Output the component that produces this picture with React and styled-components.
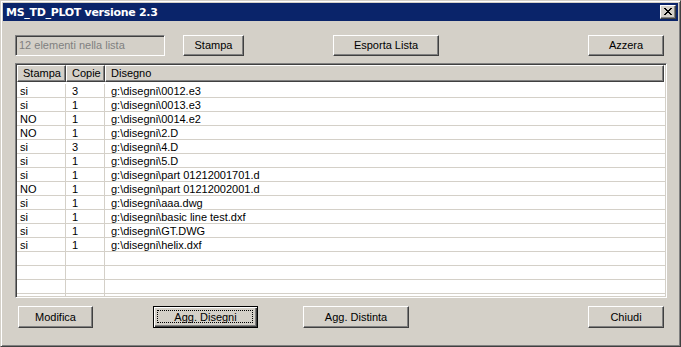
import React from "react";
import styled, { createGlobalStyle } from "styled-components";

const Global = createGlobalStyle`
  html, body { margin: 0; padding: 0; background: #D4D0C8; }
  body { width: 681px; height: 347px; overflow: hidden; }
  * { box-sizing: border-box; }
`;

const Window = styled.div`
  width: 681px;
  height: 347px;
  background: #d4d0c8;
  border: 1px solid;
  border-color: #d4d0c8 #404040 #404040 #d4d0c8;
  box-shadow: inset 1px 1px #ffffff, inset -1px -1px #808080;
  padding: 2px;
  display: flex;
  flex-direction: column;
  font-family: "Liberation Sans", Arial, sans-serif;
  font-size: 11px;
  color: #000;
`;

const TitleBar = styled.div`
  height: 18px;
  background: #0a246a;
  display: flex;
  align-items: center;
  justify-content: space-between;
  padding: 0 2px 0 3px;
  flex: none;
`;

const Title = styled.span`
  font-family: "DejaVu Sans", Verdana, sans-serif;
  font-weight: bold;
  font-size: 11px;
  color: #fff;
  letter-spacing: -0.3px;
  line-height: 18px;
  padding-top: 1px;
`;

const CloseBtn = styled.div`
  width: 16px;
  height: 14px;
  background: #d4d0c8;
  border: 1px solid;
  border-color: #ffffff #404040 #404040 #ffffff;
  box-shadow: inset -1px -1px #808080;
  display: flex;
  align-items: center;
  justify-content: center;
  padding-bottom: 1px;
  padding-right: 1px;
`;

const Body = styled.div`
  flex: 1;
  display: flex;
  flex-direction: column;
  padding: 14px 10px 0 12px;
`;

const Row = styled.div`
  display: flex;
  align-items: flex-start;
  height: ${(p) => p.$h}px;
  margin-top: ${(p) => p.$mt || 0}px;
  flex: none;
`;

const Button = styled.div`
  position: relative;
  width: ${(p) => p.$w}px;
  height: ${(p) => p.$h}px;
  margin-left: ${(p) => p.$ml}px;
  background: #d4d0c8;
  border: 1px solid;
  border-color: ${(p) =>
    p.$default ? "#000 #000 #000 #000" : "#ffffff #404040 #404040 #ffffff"};
  box-shadow: ${(p) =>
    p.$default
      ? "inset 1px 1px #ffffff, inset -1px -1px #404040, inset -2px -2px #808080"
      : "inset -1px -1px #808080"};
  display: flex;
  align-items: center;
  justify-content: center;
  padding-bottom: 1px;
  flex: none;
  &::after {
    content: "";
    display: ${(p) => (p.$default ? "block" : "none")};
    position: absolute;
    left: 3px;
    top: 3px;
    right: 4px;
    bottom: 4px;
    border: 1px dotted #000;
  }
`;

const TextBox = styled.div`
  width: ${(p) => p.$w}px;
  height: ${(p) => p.$h}px;
  background: #d4d0c8;
  border: 1px solid;
  border-color: #808080 #ffffff #ffffff #808080;
  box-shadow: inset 1px 1px #404040, inset -1px -1px #d4d0c8;
  color: #808080;
  display: flex;
  align-items: center;
  padding: 0 0 1px 3px;
  flex: none;
`;

const List = styled.div`
  margin-top: 7px;
  width: 652px;
  height: 235px;
  border: 1px solid;
  border-color: #808080 #ffffff #ffffff #808080;
  box-shadow: inset 1px 1px #404040, inset -1px -1px #d4d0c8;
  background: #fff;
  padding: 1px;
  display: flex;
  flex-direction: column;
  overflow: hidden;
  flex: none;
`;

const Grid = `
  display: grid;
  grid-template-columns: 49px 39px 1fr;
`;

const Header = styled.div`
  ${Grid};
  height: 17px;
  flex: none;
  margin-right: 1px;
`;

const HeadCell = styled.div`
  background: #d4d0c8;
  border: 1px solid;
  border-color: #ffffff #404040 #404040 #ffffff;
  box-shadow: inset -1px -1px #808080;
  padding: 0 0 1px 5px;
  display: flex;
  align-items: center;
  white-space: nowrap;
  overflow: hidden;
`;

const Rows = styled.div`
  padding-top: 2px;
  flex: 1;
  overflow: hidden;
`;

const DataRow = styled.div`
  ${Grid};
  height: 14px;
`;

const Cell = styled.div`
  height: 14px;
  line-height: 14px;
  border-bottom: 1px solid #d4d0c8;
  border-right: ${(p) => (p.$last ? "none" : "1px solid #d4d0c8")};
  padding-left: ${(p) => p.$pl}px;
  white-space: nowrap;
  overflow: hidden;
`;

const CloseGlyph = () => {
  const px = [
    [0, 0], [1, 0], [6, 0], [7, 0],
    [1, 1], [2, 1], [5, 1], [6, 1],
    [2, 2], [3, 2], [4, 2], [5, 2],
    [3, 3], [4, 3],
    [2, 4], [3, 4], [4, 4], [5, 4],
    [1, 5], [2, 5], [5, 5], [6, 5],
    [0, 6], [1, 6], [6, 6], [7, 6],
  ];
  return (
    <svg width="8" height="7" viewBox="0 0 8 7" shapeRendering="crispEdges">
      {px.map(([x, y]) => (
        <rect key={`${x}-${y}`} x={x} y={y} width="1" height="1" fill="#000" />
      ))}
    </svg>
  );
};

const data = [
  ["si", "3", "g:\\disegni\\0012.e3"],
  ["si", "1", "g:\\disegni\\0013.e3"],
  ["NO", "1", "g:\\disegni\\0014.e2"],
  ["NO", "1", "g:\\disegni\\2.D"],
  ["si", "3", "g:\\disegni\\4.D"],
  ["si", "1", "g:\\disegni\\5.D"],
  ["si", "1", "g:\\disegni\\part 01212001701.d"],
  ["NO", "1", "g:\\disegni\\part 01212002001.d"],
  ["si", "1", "g:\\disegni\\aaa.dwg"],
  ["si", "1", "g:\\disegni\\basic line test.dxf"],
  ["si", "1", "g:\\disegni\\GT.DWG"],
  ["si", "1", "g:\\disegni\\helix.dxf"],
  ["", "", ""],
  ["", "", ""],
  ["", "", ""],
  ["", "", ""],
];

export default function App() {
  return (
    <>
      <Global />
      <Window>
        <TitleBar>
          <Title>MS_TD_PLOT versione 2.3</Title>
          <CloseBtn>
            <CloseGlyph />
          </CloseBtn>
        </TitleBar>
        <Body>
          <Row $h={21}>
            <TextBox $w={150} $h={21}>12 elementi nella lista</TextBox>
            <Button $w={61} $h={21} $ml={18}>Stampa</Button>
            <Button $w={106} $h={21} $ml={89}>Esporta Lista</Button>
            <Button $w={76} $h={21} $ml={149}>Azzera</Button>
          </Row>
          <List>
            <Header>
              <HeadCell>Stampa</HeadCell>
              <HeadCell>Copie</HeadCell>
              <HeadCell>Disegno</HeadCell>
            </Header>
            <Rows>
              {data.map((r, i) => (
                <DataRow key={i}>
                  <Cell $pl={3}>{r[0]}</Cell>
                  <Cell $pl={6}>{r[1]}</Cell>
                  <Cell $pl={6} $last>{r[2]}</Cell>
                </DataRow>
              ))}
            </Rows>
          </List>
          <Row $h={22} $mt={8}>
            <Button $w={75} $h={22} $ml={3}>Modifica</Button>
            <Button $w={105} $h={22} $ml={60} $default>Agg. Disegni</Button>
            <Button $w={106} $h={22} $ml={45}>Agg. Distinta</Button>
            <Button $w={76} $h={22} $ml={179}>Chiudi</Button>
          </Row>
        </Body>
      </Window>
    </>
  );
}
